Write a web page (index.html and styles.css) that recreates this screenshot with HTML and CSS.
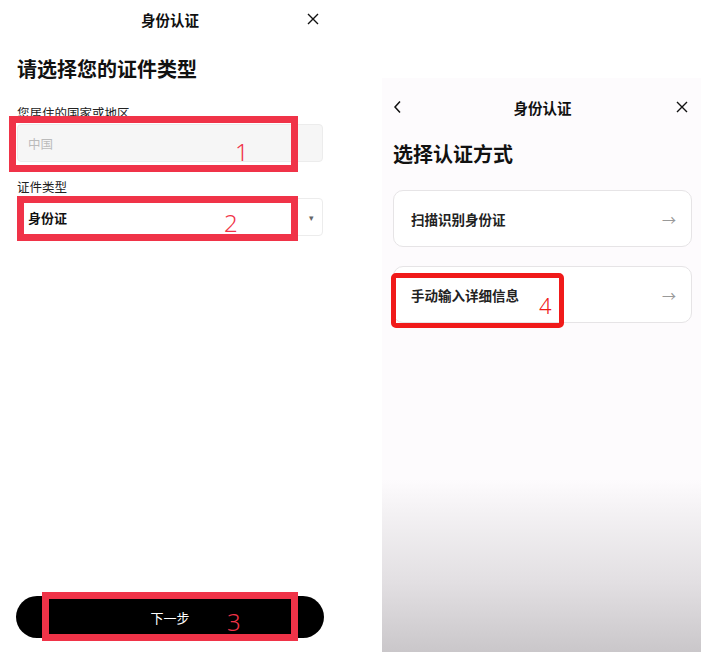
FILE: index.html
```html
<!DOCTYPE html>
<html lang="zh-CN">
<head>
  <meta charset="UTF-8">
  <meta name="viewport" content="width=device-width, initial-scale=1.0">
  <title>身份认证</title>
  <link rel="stylesheet" href="styles.css">
</head>
<body>
  <div class="screen left">
    <div class="header">
      <span></span>
      <span class="title">身份认证</span>
      <span class="close">
        <svg width="12" height="12" viewBox="0 0 12 12"><path d="M1 1L11 11M11 1L1 11" stroke="#111" stroke-width="1.4" fill="none"/></svg>
      </span>
    </div>
    <h1 class="heading">请选择您的证件类型</h1>
    <div class="label">您居住的国家或地区</div>
    <div class="field disabled">
      <span class="value muted">中国</span>
      <div class="mark box1"></div>
      <div class="num num1">1</div>
    </div>
    <div class="label label2">证件类型</div>
    <div class="field">
      <span class="value strong">身份证</span>
      <span class="caret">▾</span>
      <div class="mark box2"></div>
      <div class="num num2">2</div>
    </div>
    <div class="spacer"></div>
    <div class="next">
      <span>下一步</span>
      <div class="mark box3"></div>
      <div class="num num3">3</div>
    </div>
  </div>

  <div class="screen right">
    <div class="header rheader">
      <span class="back">
        <svg width="10" height="14" viewBox="0 0 10 14"><path d="M7 1.5L2 7L7 12.5" stroke="#111" stroke-width="1.5" fill="none"/></svg>
      </span>
      <span class="title">身份认证</span>
      <span class="close">
        <svg width="12" height="12" viewBox="0 0 12 12"><path d="M1 1L11 11M11 1L1 11" stroke="#111" stroke-width="1.4" fill="none"/></svg>
      </span>
    </div>
    <h1 class="heading rheading">选择认证方式</h1>
    <div class="card">
      <span>扫描识别身份证</span>
      <span class="arrow">→</span>
    </div>
    <div class="card">
      <span>手动输入详细信息</span>
      <span class="arrow">→</span>
      <div class="mark box4"></div>
      <div class="num num4">4</div>
    </div>
  </div>
</body>
</html>
```

FILE: styles.css
```css
body {
  margin: 0;
  font-family: "Noto Sans CJK SC", "Noto Sans", sans-serif;
  color: #111;
  background: #fff;
  display: flex;
  height: 652px;
  overflow: hidden;
}
.screen {
  display: flex;
  flex-direction: column;
  box-sizing: border-box;
}
.left {
  width: 340px;
  height: 652px;
  padding: 0 17px;
}
.right {
  width: 319px;
  margin-left: 42px;
  margin-top: 78px;
  height: 574px;
  padding: 0 9px 0 11px;
  background: linear-gradient(to bottom, #fdfbfd 0, #fdfbfd 70%, #f3f1f3 76%, #e2dfe2 88%, #cac7ca 100%);
}
.header {
  display: grid;
  grid-template-columns: 1fr auto 1fr;
  align-items: center;
  height: 38px;
}
.title {
  font-size: 14.5px;
  font-weight: bold;
}
.close {
  justify-self: end;
  display: flex;
  margin-right: 4px;
}
.back {
  display: flex;
}
.rheader {
  height: 58px;
}
.heading {
  margin: 17px 0 0;
  font-size: 20px;
  line-height: 28px;
  font-weight: bold;
}
.rheading {
  margin: 4px 0 0;
}
.label {
  margin-top: 22px;
  font-size: 12.5px;
  line-height: 16px;
  color: #222;
}
.label2 {
  margin-top: 17px;
}
.field {
  position: relative;
  height: 38px;
  margin-top: 3px;
  border: 1px solid #ececec;
  border-radius: 4px;
  box-sizing: border-box;
  display: flex;
  align-items: center;
  padding: 0 10px;
  background: #fff;
}
.field.disabled {
  background: #f6f6f6;
}
.value {
  flex: 1;
  font-size: 13px;
}
.muted {
  color: #bbb;
  font-size: 12.5px;
}
.strong {
  font-weight: bold;
}
.caret {
  font-size: 9px;
  color: #666;
  margin-right: -2px;
}
.spacer {
  flex: 1;
}
.next {
  position: relative;
  height: 42px;
  margin: 0 -1px 14px;
  border-radius: 21px;
  background: #000;
  color: #fff;
  font-size: 13px;
  display: flex;
  align-items: center;
  justify-content: center;
}
.card {
  position: relative;
  height: 57px;
  margin-bottom: 19px;
  border: 1px solid #e6e4e6;
  border-radius: 10px;
  box-sizing: border-box;
  background: #fff;
  display: flex;
  align-items: center;
  justify-content: space-between;
  padding: 0 15px 0 17px;
  font-size: 13.5px;
  font-weight: bold;
  color: #222;
}
.rheading + .card {
  margin-top: 22px;
}
.arrow {
  color: #999;
  font-weight: normal;
  font-size: 14px;
}
.mark {
  position: absolute;
  box-sizing: border-box;
  border: 7px solid #f03348;
}
.num {
  position: absolute;
  color: #f03348;
  font-family: "Noto Sans", sans-serif;
  font-weight: 300;
  font-size: 24px;
  line-height: 24px;
}
.box1 {
  left: -9px;
  top: -9px;
  width: 289px;
  height: 56px;
}
.num1 {
  left: 217px;
  top: 15px;
}
.box2 {
  left: -1px;
  top: -3px;
  width: 281px;
  height: 45px;
}
.num2 {
  left: 206px;
  top: 12px;
}
.box3 {
  left: 26px;
  top: -4px;
  width: 256px;
  height: 49px;
}
.num3 {
  left: 211px;
  top: 14px;
}
.box4 {
  left: -3px;
  top: 6px;
  width: 173px;
  height: 55px;
  border: 5px solid #f01a1a;
  border-radius: 5px;
}
.num4 {
  left: 145px;
  top: 26px;
  font-size: 22px;
  color: #f01a1a;
}
```
